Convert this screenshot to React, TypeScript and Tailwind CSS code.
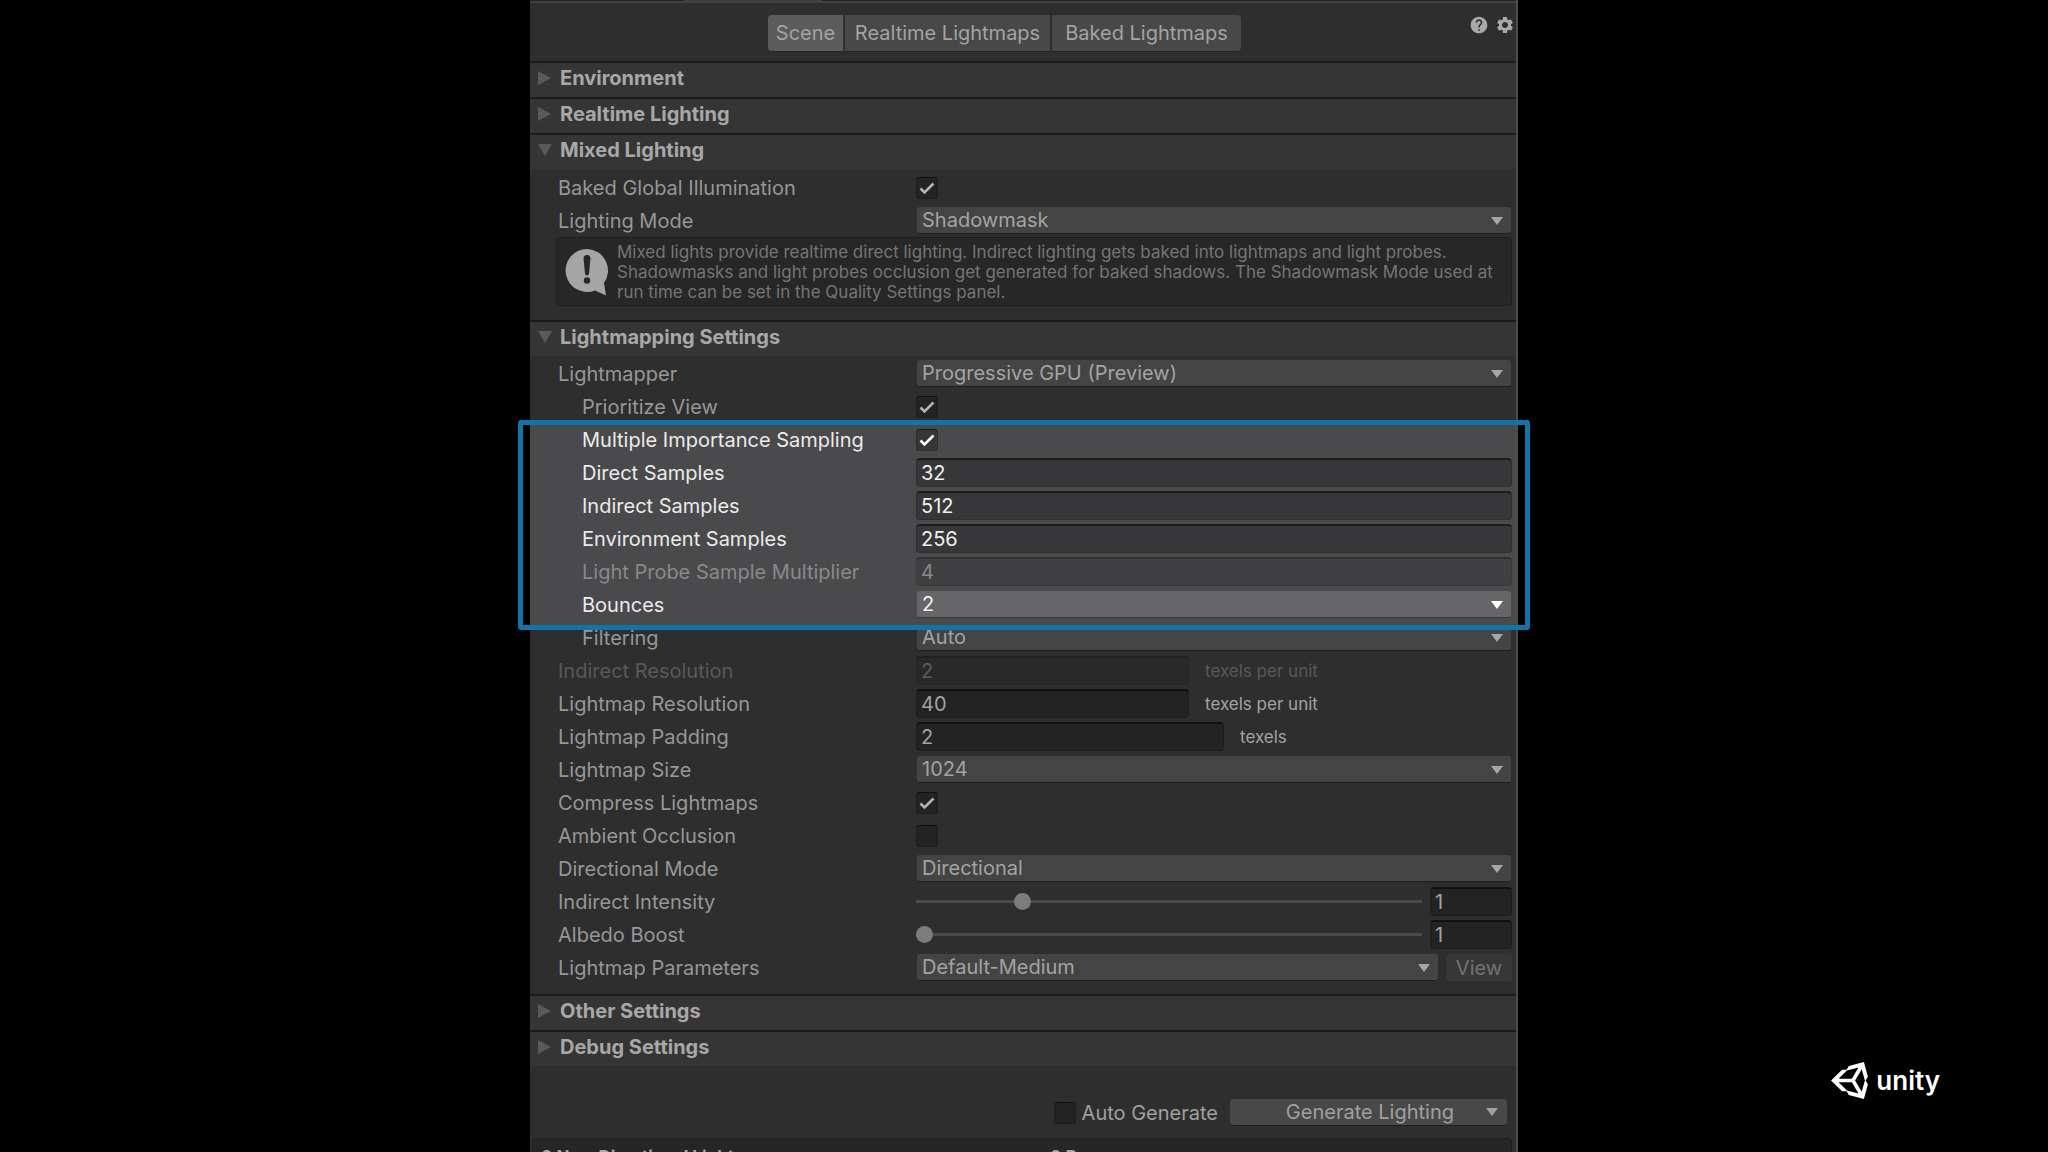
import { ReactNode, useId, useState } from 'react';
import clsx from 'clsx';
import { MdHelp, MdSettings } from 'react-icons/md';

const TABS = [
  { name: 'Scene', width: 'w-[75px]' },
  { name: 'Realtime Lightmaps', width: 'w-[205px]' },
  { name: 'Baked Lightmaps', width: 'w-[189px]' },
];

// Row state: normal, greyed out, or inside the highlighted block
type Tone = 'normal' | 'disabled' | 'bright' | 'brightDisabled';

const labelTone: Record<Tone, string> = {
  normal: 'text-[#979797]',
  disabled: 'text-[#595959]',
  bright: 'text-[#ebebeb]',
  brightDisabled: 'text-[#898989]',
};

const inputTone: Record<Tone, string> = {
  normal: 'bg-[#232323] border-[#1d1d1d] border-t-[#111111] text-[#a3a3a3]',
  disabled: 'bg-[#292929] border-[#262626] border-t-[#202020] text-[#5c5c5c]',
  bright: 'bg-[#373739] border-[#2f2f30] border-t-[#1c1c1d] text-[#f0f0f0]',
  brightDisabled: 'bg-[#404042] border-[#3a3a3b] border-t-[#303031] text-[#898989]',
};

function Arrow({ className }: { className?: string }) {
  return (
    <svg viewBox="0 0 12 8" className={clsx('w-3 h-2 shrink-0', className)} fill="currentColor">
      <path d="M0 0h12L6 8z" />
    </svg>
  );
}

function Foldout({ title, open = false }: { title: string; open?: boolean }) {
  const [expanded, setExpanded] = useState(open);
  return (
    <button
      type="button"
      aria-expanded={expanded}
      onClick={() => setExpanded(!expanded)}
      className="flex items-center gap-2 w-full h-9 pl-2 pb-1 border-t-2 border-[#1b1b1b] bg-[#353535] text-left text-xl font-bold text-[#a8a8a8]"
    >
      <svg viewBox="0 0 14 14" className="w-3.5 h-3.5 text-[#5a5a5a]" fill="currentColor">
        <path d={expanded ? 'M0 1h14L7 13z' : 'M0 0v14l13-7z'} />
      </svg>
      {title}
    </button>
  );
}

interface RowProps {
  label: string;
  indent?: boolean;
  tone?: Tone;
  children: (id: string) => ReactNode;
}

function Row({ label, indent, tone = 'normal', children }: RowProps) {
  const id = useId();
  return (
    <div className="flex items-center h-[33px] pl-7 pr-1">
      <label htmlFor={id} className={clsx('w-[358px] shrink-0 whitespace-nowrap', indent && 'pl-6', labelTone[tone])}>
        {label}
      </label>
      <div className="flex items-center flex-1 min-w-0">{children(id)}</div>
    </div>
  );
}

function Checkbox({ id, checked = false, bright = false }: { id: string; checked?: boolean; bright?: boolean }) {
  return (
    <span className="relative flex w-[22px] h-[22px] shrink-0">
      <input
        id={id}
        type="checkbox"
        defaultChecked={checked}
        className={clsx(
          'peer appearance-none w-full h-full rounded-[3px] border',
          bright ? 'bg-[#373739] border-[#2f2f30] border-t-[#1c1c1d]' : 'bg-[#232323] border-[#1d1d1d] border-t-[#111111]',
        )}
      />
      <svg
        viewBox="0 0 22 22"
        className={clsx('absolute inset-0 hidden peer-checked:block pointer-events-none', bright ? 'text-white' : 'text-[#b4b4b4]')}
        fill="none"
        stroke="currentColor"
        strokeWidth={2.6}
      >
        <path d="M4.5 11.5l4 4L17.5 6.5" />
      </svg>
    </span>
  );
}

function TextField({ id, value, tone = 'normal', className = 'w-full' }: { id?: string; value: string; tone?: Tone; className?: string }) {
  return (
    <input
      id={id}
      type="text"
      aria-label={id ? undefined : 'Value'}
      defaultValue={value}
      disabled={tone === 'disabled' || tone === 'brightDisabled'}
      className={clsx('h-[29px] min-w-0 px-1 rounded border border-t-2', inputTone[tone], className)}
    />
  );
}

function Dropdown({ id, value, bright = false }: { id: string; value: string; bright?: boolean }) {
  return (
    <span className="relative flex items-center flex-1 min-w-0 px-px">
      <select
        id={id}
        defaultValue={value}
        className={clsx(
          'appearance-none w-full h-[27px] pl-[5px] pr-8 rounded-[3px] border-b',
          bright ? 'bg-[#666668] border-[#38383a] text-[#f0f0f0]' : 'bg-[#444444] border-[#1e1e1e] text-[#a3a3a3]',
        )}
      >
        <option>{value}</option>
      </select>
      <Arrow className={clsx('absolute right-[9px] pointer-events-none', bright ? 'text-white' : 'text-[#a6a6a6]')} />
    </span>
  );
}

function Slider({ id, min, max }: { id: string; min: number; max: number }) {
  const [value, setValue] = useState(1);
  return (
    <>
      <input
        id={id}
        type="range"
        min={min}
        max={max}
        step={0.1}
        value={value}
        onChange={(e) => setValue(Number(e.target.value))}
        className="appearance-none flex-1 min-w-0 h-[17px] bg-transparent [&::-webkit-slider-runnable-track]:h-[3px] [&::-webkit-slider-runnable-track]:bg-[#4a4a4a] [&::-webkit-slider-thumb]:appearance-none [&::-webkit-slider-thumb]:w-[17px] [&::-webkit-slider-thumb]:h-[17px] [&::-webkit-slider-thumb]:-mt-[7px] [&::-webkit-slider-thumb]:rounded-full [&::-webkit-slider-thumb]:bg-[#7c7c7c]"
      />
      <TextField value={String(value)} className="w-[82px] ml-2" />
    </>
  );
}

function Highlight({ children }: { children: ReactNode }) {
  return (
    <div className="relative z-10">
      <div className="absolute inset-x-0 top-0 -bottom-1 bg-[#4a4a4c]" />
      <div className="relative">{children}</div>
      <div className="absolute -left-3 -right-3.5 -top-[3px] -bottom-[9px] border-[5px] border-[#1273a5] rounded-[3px] pointer-events-none" />
    </div>
  );
}

function HelpBox() {
  return (
    <div className="flex items-center gap-2 ml-[26px] mr-1 pl-2 pr-4 h-[69px] rounded border border-[#1f1f1f] bg-[#272727]">
      <svg viewBox="0 0 44 48" className="w-11 h-12 shrink-0">
        <path d="M22 1a21.500 21.500 0 1 0 8 41.500L41 47.500l-2-12.500A21.500 21.500 0 0 0 22 1z" fill="#a5a5a5" />
        <path d="M18.500 10.500a3.500 3.500 0 0 1 7 0l-1.500 15a2 2 0 0 1-4 0z" fill="#272727" />
        <circle cx="22" cy="32.500" r="3.200" fill="#272727" />
      </svg>
      <p className="text-[17px] leading-5 text-[#757575]">
        Mixed lights provide realtime direct lighting. Indirect lighting gets baked into lightmaps and light probes.
        Shadowmasks and light probes occlusion get generated for baked shadows. The Shadowmask Mode used at run time can
        be set in the Quality Settings panel.
      </p>
    </div>
  );
}

function Toolbar() {
  const [active, setActive] = useState('Scene');
  return (
    <div className="flex items-start h-[58px] pt-3 pl-2.5">
      <div className="flex flex-1 justify-center gap-0.5">
        {TABS.map(({ name, width }) => (
          <button
            key={name}
            type="button"
            onClick={() => setActive(name)}
            className={clsx(
              'h-[37px] pb-px first:rounded-l last:rounded-r text-[#a3a3a3] border-b border-[#222222] whitespace-nowrap',
              width,
              name === active ? 'bg-[#5c5c5c]' : 'bg-[#484848]',
            )}
          >
            {name}
          </button>
        ))}
      </div>
      <div className="flex gap-1.5 pr-px text-[#a8a8a8]">
        <button type="button" aria-label="Help">
          <MdHelp className="w-5 h-5" />
        </button>
        <button type="button" aria-label="Settings">
          <MdSettings className="w-5 h-5" />
        </button>
      </div>
    </div>
  );
}

export default function App() {
  return (
    <div className="relative h-screen overflow-hidden bg-black font-['Inter',sans-serif] text-xl leading-6">
      <main className="w-full max-w-[988px] mx-auto border-r-2 border-[#4c4c4c] bg-[#2e2e2e]">
        <div className="h-[3px] bg-[#222222] border-b-2 border-[#404040]">
          <div className="w-[138px] h-px ml-[154px] bg-[#404040]" />
        </div>
        <Toolbar />

        <Foldout title="Environment" />
        <Foldout title="Realtime Lighting" />
        <Foldout title="Mixed Lighting" open />
        <section className="pt-0.5 pb-3.5">
          <Row label="Baked Global Illumination">{(id) => <Checkbox id={id} checked />}</Row>
          <Row label="Lighting Mode">{(id) => <Dropdown id={id} value="Shadowmask" />}</Row>
          <HelpBox />
        </section>

        <Foldout title="Lightmapping Settings" open />
        <section className="pt-px pb-2.5">
          <Row label="Lightmapper">{(id) => <Dropdown id={id} value="Progressive GPU (Preview)" />}</Row>
          <Row label="Prioritize View" indent>{(id) => <Checkbox id={id} checked />}</Row>
          <Highlight>
            <Row label="Multiple Importance Sampling" indent tone="bright">
              {(id) => <Checkbox id={id} checked bright />}
            </Row>
            <Row label="Direct Samples" indent tone="bright">
              {(id) => <TextField id={id} value="32" tone="bright" />}
            </Row>
            <Row label="Indirect Samples" indent tone="bright">
              {(id) => <TextField id={id} value="512" tone="bright" />}
            </Row>
            <Row label="Environment Samples" indent tone="bright">
              {(id) => <TextField id={id} value="256" tone="bright" />}
            </Row>
            <Row label="Light Probe Sample Multiplier" indent tone="brightDisabled">
              {(id) => <TextField id={id} value="4" tone="brightDisabled" />}
            </Row>
            <Row label="Bounces" indent tone="bright">{(id) => <Dropdown id={id} value="2" bright />}</Row>
          </Highlight>
          <Row label="Filtering" indent>{(id) => <Dropdown id={id} value="Auto" />}</Row>
          <Row label="Indirect Resolution" tone="disabled">
            {(id) => (
              <>
                <TextField id={id} value="2" tone="disabled" className="w-[273px]" />
                <span className="ml-4 text-[17px] text-[#595959]">texels per unit</span>
              </>
            )}
          </Row>
          <Row label="Lightmap Resolution">
            {(id) => (
              <>
                <TextField id={id} value="40" className="w-[273px]" />
                <span className="ml-4 text-[17px] text-[#a3a3a3]">texels per unit</span>
              </>
            )}
          </Row>
          <Row label="Lightmap Padding">
            {(id) => (
              <>
                <TextField id={id} value="2" className="w-[308px]" />
                <span className="ml-4 text-[17px] text-[#a3a3a3]">texels</span>
              </>
            )}
          </Row>
          <Row label="Lightmap Size">{(id) => <Dropdown id={id} value="1024" />}</Row>
          <Row label="Compress Lightmaps">{(id) => <Checkbox id={id} checked />}</Row>
          <Row label="Ambient Occlusion">{(id) => <Checkbox id={id} />}</Row>
          <Row label="Directional Mode">{(id) => <Dropdown id={id} value="Directional" />}</Row>
          <Row label="Indirect Intensity">{(id) => <Slider id={id} min={0} max={5} />}</Row>
          <Row label="Albedo Boost">{(id) => <Slider id={id} min={1} max={10} />}</Row>
          <Row label="Lightmap Parameters">
            {(id) => (
              <>
                <Dropdown id={id} value="Default-Medium" />
                <button type="button" disabled className="w-[66px] h-[27px] ml-[7px] rounded-[3px] bg-[#373737] text-[#727272]">
                  View
                </button>
              </>
            )}
          </Row>
        </section>

        <Foldout title="Other Settings" />
        <Foldout title="Debug Settings" />

        <div className="flex items-center justify-end gap-3 pt-[33px] pb-3 pr-[9px] text-[#a0a0a0]">
          <div className="flex items-center gap-1.5">
            <Checkbox id="auto-generate" />
            <label htmlFor="auto-generate">Auto Generate</label>
          </div>
          <button
            type="button"
            className="flex items-center justify-end gap-8 w-[277px] h-[27px] pr-[9px] rounded border-b border-[#1e1e1e] bg-[#484848]"
          >
            Generate Lighting
            <Arrow />
          </button>
        </div>
        <div className="grid grid-cols-2 ml-0.5 mr-1 pt-1.5 px-2 rounded border border-[#1f1f1f] bg-[#262626] text-[17px] font-bold text-[#a8a8a8]">
          <span>0 Non-Directional Lightmaps</span>
          <span className="pl-7">0 B</span>
        </div>
      </main>

      {/* Watermark */}
      <div className="absolute right-[108px] bottom-[53px] flex items-center gap-2 text-white">
        <svg viewBox="15 14 484 484" className="w-[37px] h-[37px]" fill="currentColor">
          <path d="M498 206.400L445.300 14.700 248.200 66.100 219 116.100l-59.200-.4L15.500 256l144.300 140.300 59.200-.4 29.200 50 197.100 51.400L498 305.700 468 256zM223.800 124.200l150.700-37.700L288 232.300H114.900zm0 263.600L114.900 279.700H288l86.500 145.800zm193 14L330.200 256l86.600-145.800L458.600 256z" />
        </svg>
        <span className="text-[26px] leading-9 font-semibold">unity</span>
      </div>
    </div>
  );
}
